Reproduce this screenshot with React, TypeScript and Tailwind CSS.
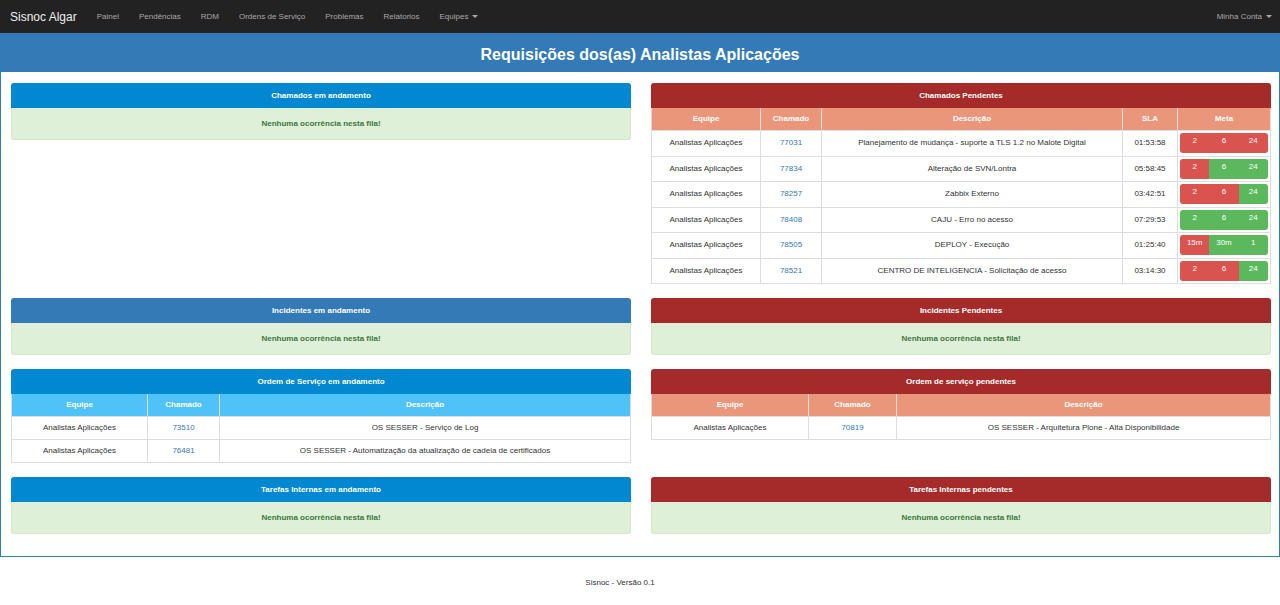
import React from 'react';

type Seg = { label: string; ok: boolean };

type Pendente = {
  id: string;
  desc: string;
  sla: string;
  meta: Seg[];
};

const EQUIPE = 'Analistas Aplicações';

function meta(labels: string[], okFrom: number): Seg[] {
  return labels.map((label, i) => ({ label, ok: i >= okFrom }));
}

const PENDENTES: Pendente[] = [
  { id: '77031', desc: 'Planejamento de mudança - suporte a TLS 1.2 no Malote Digital', sla: '01:53:58', meta: meta(['2', '6', '24'], 3) },
  { id: '77834', desc: 'Alteração de SVN/Lontra', sla: '05:58:45', meta: meta(['2', '6', '24'], 1) },
  { id: '78257', desc: 'Zabbix Externo', sla: '03:42:51', meta: meta(['2', '6', '24'], 2) },
  { id: '78408', desc: 'CAJU - Erro no acesso', sla: '07:29:53', meta: meta(['2', '6', '24'], 0) },
  { id: '78505', desc: 'DEPLOY - Execução', sla: '01:25:40', meta: meta(['15m', '30m', '1'], 1) },
  { id: '78521', desc: 'CENTRO DE INTELIGENCIA - Solicitação de acesso', sla: '03:14:30', meta: meta(['2', '6', '24'], 2) },
];

const OS_ANDAMENTO = [
  { id: '73510', desc: 'OS SESSER - Serviço de Log' },
  { id: '76481', desc: 'OS SESSER - Automatização da atualização de cadeia de certificados' },
];

const NAV = ['Painel', 'Pendências', 'RDM', 'Ordens de Serviço', 'Problemas', 'Relatorios'];

function Caret() {
  return <span className="ml-[4px] inline-block h-0 w-0 border-x-[3px] border-t-[3px] border-x-transparent border-t-current align-middle" />;
}

function Heading({ title, color }: { title: string; color: string }) {
  return (
    <div className={`flex h-[25px] items-center justify-center rounded-t-[3px] text-[8px] font-bold text-white ${color}`}>
      {title}
    </div>
  );
}

function Empty() {
  return (
    <div className="flex h-[32px] items-center justify-center rounded-b-[3px] border border-t-0 border-[#d6e9c6] bg-[#dff0d8] text-[8px] font-bold text-[#3c763d]">
      Nenhuma ocorrência nesta fila!
    </div>
  );
}

function EmptyBlock({ title, color }: { title: string; color: string }) {
  return (
    <div>
      <Heading title={title} color={color} />
      <Empty />
    </div>
  );
}

function MetaBar({ segs }: { segs: Seg[] }) {
  return (
    <div className="flex h-[20px] w-full overflow-hidden rounded-[3px]">
      {segs.map((s, i) => (
        <div key={i} className={`flex-1 pt-[1px] text-center text-[8px] leading-[13px] text-white ${s.ok ? 'bg-[#5cb85c]' : 'bg-[#d9534f]'}`}>
          {s.label}
        </div>
      ))}
    </div>
  );
}

function OsTable({ headClass, rows, w1, w2 }: { headClass: string; rows: { id: string; desc: string }[]; w1: string; w2: string }) {
  return (
    <div className="border-x border-b border-[#ddd]">
      <div className={`flex h-[22px] text-[8px] font-bold text-white ${headClass}`}>
        <div className={`flex items-center justify-center ${w1}`}>Equipe</div>
        <div className={`flex items-center justify-center border-l border-[#ddd] ${w2}`}>Chamado</div>
        <div className="flex flex-1 items-center justify-center border-l border-[#ddd]">Descrição</div>
      </div>
      {rows.map((r) => (
        <div key={r.id} className="flex h-[23px] border-t border-[#ddd] text-[8px] text-[#333]">
          <div className={`flex items-center justify-center ${w1}`}>{EQUIPE}</div>
          <div className={`flex items-center justify-center border-l border-[#ddd] text-[#337ab7] ${w2}`}>{r.id}</div>
          <div className="flex flex-1 items-center justify-center border-l border-[#ddd]">{r.desc}</div>
        </div>
      ))}
    </div>
  );
}

function ChamadosPendentes() {
  return (
    <div>
      <Heading title="Chamados Pendentes" color="bg-[#a52a2a]" />
      <div className="border-x border-b border-[#ddd]">
        <div className="flex h-[22px] bg-[#e9967a] text-[8px] font-bold text-white">
          <div className="flex w-[108px] items-center justify-center">Equipe</div>
          <div className="flex w-[61px] items-center justify-center border-l border-[#ddd]">Chamado</div>
          <div className="flex flex-1 items-center justify-center border-l border-[#ddd]">Descrição</div>
          <div className="flex w-[55px] items-center justify-center border-l border-[#ddd]">SLA</div>
          <div className="flex w-[93px] items-center justify-center border-l border-[#ddd]">Meta</div>
        </div>
        {PENDENTES.map((p) => (
          <div key={p.id} className="flex h-[25.5px] border-t border-[#ddd] text-[8px] text-[#333]">
            <div className="flex w-[108px] items-center justify-center">{EQUIPE}</div>
            <div className="flex w-[61px] items-center justify-center border-l border-[#ddd] text-[#337ab7]">{p.id}</div>
            <div className="flex flex-1 items-center justify-center border-l border-[#ddd]">{p.desc}</div>
            <div className="flex w-[55px] items-center justify-center border-l border-[#ddd]">{p.sla}</div>
            <div className="flex w-[93px] items-center border-l border-[#ddd] px-[2px]">
              <MetaBar segs={p.meta} />
            </div>
          </div>
        ))}
      </div>
    </div>
  );
}

export default function App() {
  return (
    <div className="min-h-[605px] bg-white font-['Liberation_Sans',Arial,sans-serif]">
      <nav className="flex h-[33px] items-center bg-[#222] text-[8px] text-[#a9a9a9]">
        <span className="px-[10px] text-[12px] text-[#eee]">Sisnoc Algar</span>
        {NAV.map((n) => (
          <span key={n} className="px-[10px]">{n}</span>
        ))}
        <span className="flex items-center px-[10px]">Equipes<Caret /></span>
        <span className="ml-auto flex items-center pr-[8px]">Minha Conta<Caret /></span>
      </nav>

      <div className="border border-t-0 border-[#337ab7]">
        <div className="h-[39px] bg-[#337ab7] pt-[13px] text-center text-[16px] font-bold leading-[18px] text-white">
          Requisições dos(as) Analistas Aplicações
        </div>
        <div className="flex flex-col gap-[14px] pb-[22px] pl-[10px] pr-[8px] pt-[11px]">
          <div className="grid grid-cols-2 items-start gap-5">
            <EmptyBlock title="Chamados em andamento" color="bg-[#0288d1]" />
            <ChamadosPendentes />
          </div>
          <div className="grid grid-cols-2 items-start gap-5">
            <EmptyBlock title="Incidentes em andamento" color="bg-[#337ab7]" />
            <EmptyBlock title="Incidentes Pendentes" color="bg-[#a52a2a]" />
          </div>
          <div className="grid grid-cols-2 items-start gap-5">
            <div>
              <Heading title="Ordem de Serviço em andamento" color="bg-[#0288d1]" />
              <OsTable headClass="bg-[#4fc3f7]" rows={OS_ANDAMENTO} w1="w-[135px]" w2="w-[72px]" />
            </div>
            <div>
              <Heading title="Ordem de serviço pendentes" color="bg-[#a52a2a]" />
              <OsTable headClass="bg-[#e9967a]" rows={[{ id: '70819', desc: 'OS SESSER - Arquitetura Plone - Alta Disponibilidade' }]} w1="w-[156px]" w2="w-[88px]" />
            </div>
          </div>
          <div className="grid grid-cols-2 items-start gap-5">
            <EmptyBlock title="Tarefas Internas em andamento" color="bg-[#0288d1]" />
            <EmptyBlock title="Tarefas Internas pendentes" color="bg-[#a52a2a]" />
          </div>
        </div>
      </div>

      <footer className="pr-[40px] pt-[20px] text-center text-[8px] text-[#333]">Sisnoc - Versão 0.1</footer>
    </div>
  );
}
